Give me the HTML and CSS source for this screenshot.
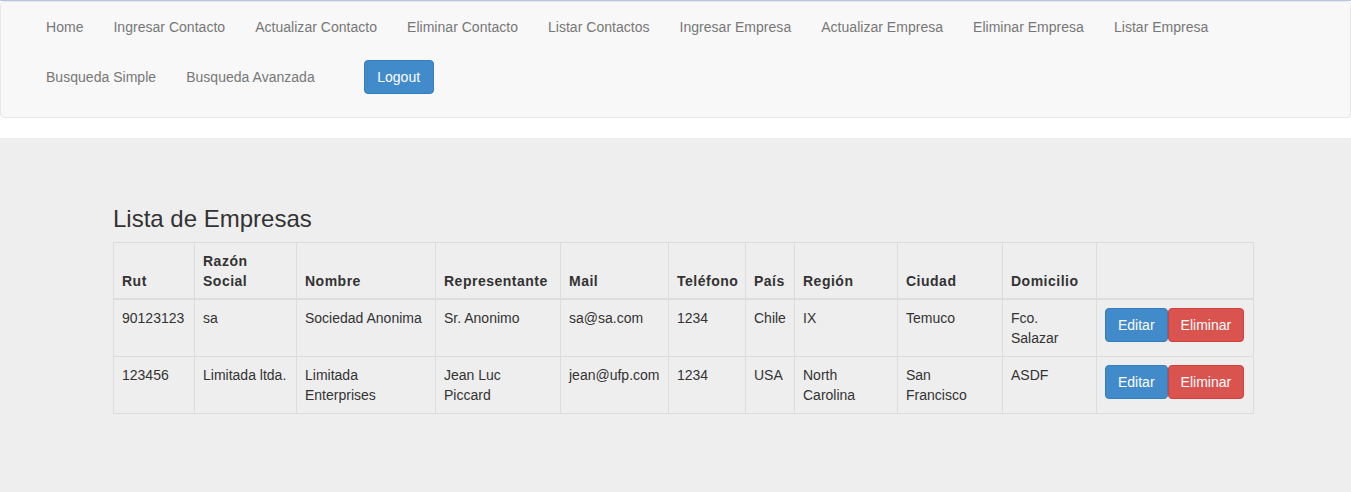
FILE: index.html
```html
<!DOCTYPE html>
<html lang="es">
<head>
<meta charset="utf-8">
<title>Lista de Empresas</title>
<link rel="stylesheet" href="styles.css">
</head>
<body>
<nav class="navbar">
  <ul class="nav-row">
    <li><a href="#">Home</a></li>
    <li><a href="#">Ingresar Contacto</a></li>
    <li><a href="#">Actualizar Contacto</a></li>
    <li><a href="#">Eliminar Contacto</a></li>
    <li><a href="#">Listar Contactos</a></li>
    <li><a href="#">Ingresar Empresa</a></li>
    <li><a href="#">Actualizar Empresa</a></li>
    <li><a href="#">Eliminar Empresa</a></li>
    <li><a href="#">Listar Empresa</a></li>
  </ul>
  <ul class="nav-row">
    <li><a href="#">Busqueda Simple</a></li>
    <li><a href="#">Busqueda Avanzada</a></li>
    <li class="nav-form"><button class="btn btn-primary btn-logout" type="button">Logout</button></li>
  </ul>
</nav>
<main class="page">
  <div class="container">
    <h3 class="title">Lista de Empresas</h3>
    <table class="table">
      <thead>
        <tr>
          <th>Rut</th>
          <th>Razón Social</th>
          <th>Nombre</th>
          <th>Representante</th>
          <th>Mail</th>
          <th>Teléfono</th>
          <th>País</th>
          <th>Región</th>
          <th>Ciudad</th>
          <th>Domicilio</th>
          <th></th>
        </tr>
      </thead>
      <tbody>
        <tr>
          <td>90123123</td>
          <td>sa</td>
          <td>Sociedad Anonima</td>
          <td>Sr. Anonimo</td>
          <td>sa@sa.com</td>
          <td>1234</td>
          <td>Chile</td>
          <td>IX</td>
          <td>Temuco</td>
          <td>Fco. Salazar</td>
          <td><div class="btn-pair"><button class="btn btn-primary" type="button">Editar</button><button class="btn btn-danger" type="button">Eliminar</button></div></td>
        </tr>
        <tr>
          <td>123456</td>
          <td>Limitada ltda.</td>
          <td>Limitada Enterprises</td>
          <td>Jean Luc Piccard</td>
          <td>jean@ufp.com</td>
          <td>1234</td>
          <td>USA</td>
          <td>North Carolina</td>
          <td>San Francisco</td>
          <td>ASDF</td>
          <td><div class="btn-pair"><button class="btn btn-primary" type="button">Editar</button><button class="btn btn-danger" type="button">Eliminar</button></div></td>
        </tr>
      </tbody>
    </table>
  </div>
</main>
</body>
</html>
```
FILE: styles.css
```css
* { box-sizing: border-box; }
html, body { margin: 0; padding: 0; }
body {
  font-family: "Liberation Sans", Arial, sans-serif;
  font-size: 14px;
  line-height: 20px;
  color: #333;
  background: #fff;
  border-top: 1px solid #b6c6de;
  min-height: 492px;
  display: flex;
  flex-direction: column;
}
.navbar {
  background: #f8f8f8;
  border: 1px solid #e7e7e7;
  border-radius: 4px;
  padding: 0 0 15px 30px;
  margin-bottom: 20px;
}
.nav-row {
  list-style: none;
  margin: 0;
  padding: 0;
  display: flex;
  align-items: flex-start;
}
.nav-row a {
  display: block;
  padding: 15px;
  color: #777;
  text-decoration: none;
  line-height: 20px;
  letter-spacing: 0.025px;
}
.nav-form { padding: 8px 0 0 34px; }
.btn {
  font-family: inherit;
  font-size: 14px;
  line-height: 20px;
  padding: 6px 12px;
  border: 1px solid transparent;
  border-radius: 4px;
  color: #fff;
  cursor: pointer;
  margin: 0;
}
.btn-logout { padding: 6px 12.5px; }
.btn-primary { background: #428bca; border-color: #357ebd; }
.btn-danger { background: #d9534f; border-color: #d43f3a; }
.page {
  flex: 1;
  background: #eee;
  padding-top: 68px;
}
.container {
  width: 1140px;
  margin-left: 113px;
}
.title {
  font-size: 24px;
  font-weight: 500;
  line-height: 26.4px;
  margin: 0 0 10px;
}
.table {
  width: 1140px;
  border-collapse: collapse;
  table-layout: fixed;
  border: 1px solid #ddd;
}
.table th, .table td {
  border: 1px solid #ddd;
  padding: 8px;
  text-align: left;
  line-height: 20px;
}
.table th {
  vertical-align: bottom;
  font-weight: bold;
  border-bottom-width: 2px;
  padding-bottom: 7px;
  letter-spacing: 0.5px;
}
.table td { vertical-align: top; }
.table td:nth-child(4) { padding-right: 12px; }
.table th:nth-child(1) { width: 81px; }
.table th:nth-child(2) { width: 102px; }
.table th:nth-child(3) { width: 139px; }
.table th:nth-child(4) { width: 125px; }
.table th:nth-child(5) { width: 108px; }
.table th:nth-child(6) { width: 77px; }
.table th:nth-child(7) { width: 49px; }
.table th:nth-child(8) { width: 103px; }
.table th:nth-child(9) { width: 105px; }
.table th:nth-child(10) { width: 94px; }
.table th:nth-child(11) { width: 157px; }
.btn-pair { display: flex; }
```
